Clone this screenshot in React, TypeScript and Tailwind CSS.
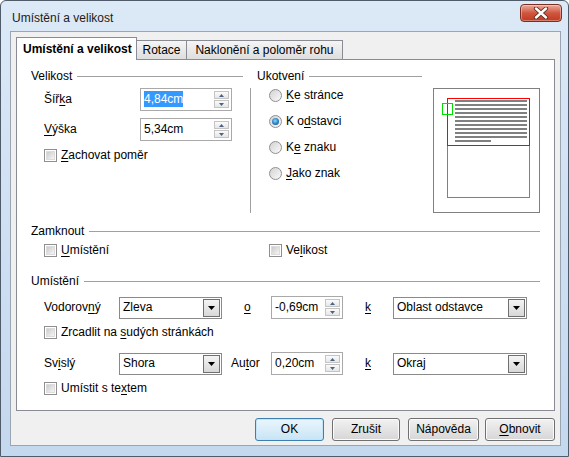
import React from 'react';

// Win7-style "Umístění a velikost" dialog

const Key = ({ children }: { children: React.ReactNode }) => (
  <span className="underline underline-offset-[2px] decoration-[1px]">{children}</span>
);

function Heading({ title, className = '' }: { title: string; className?: string }) {
  return (
    <div className={'flex items-center h-[16px] ' + className}>
      <span>{title}</span>
      <div className="flex-1 h-px bg-[#a0a0a0] ml-[5px]" />
    </div>
  );
}

function Checkbox({ children, className = '' }: { children: React.ReactNode; className?: string }) {
  return (
    <div className={'flex items-center h-[14px] ' + className}>
      <span className="w-[13px] h-[13px] border border-[#8f8f8f] bg-white p-[1px] shrink-0">
        <span className="block w-full h-full border border-[#dcdcdc] bg-gradient-to-br from-[#cbcbcb] to-[#f6f6f6]" />
      </span>
      <span className="ml-[4px]">{children}</span>
    </div>
  );
}

function Radio({ checked, children }: { checked?: boolean; children: React.ReactNode }) {
  return (
    <div className="flex items-center h-[16px] ml-[12px]">
      <span className="w-[13px] h-[13px] rounded-full border border-[#8f8f8f] bg-gradient-to-br from-[#d2d2d2] to-[#fbfbfb] flex items-center justify-center shrink-0">
        {checked && (
          <span className="w-[7px] h-[7px] rounded-full bg-[radial-gradient(circle_at_45%_40%,#8fd8ff,#2a7cc0_55%,#174a7a)]" />
        )}
      </span>
      <span className="ml-[4px]">{children}</span>
    </div>
  );
}

function SpinArrow({ up }: { up?: boolean }) {
  return (
    <span className="w-[15px] h-[8px] border border-[#c4c4c4] bg-gradient-to-b from-[#fbfbfb] to-[#e6e6e6] flex items-center justify-center">
      <svg width="5" height="3" viewBox="0 0 5 3">
        <path d={up ? 'M0 3 L2.5 0 L5 3 Z' : 'M0 0 L2.5 3 L5 0 Z'} fill="#4a6283" />
      </svg>
    </span>
  );
}

function Spin({ value, selected, className = '' }: { value: string; selected?: boolean; className?: string }) {
  return (
    <div className={'h-[23px] border border-[#a9a9a9] bg-white flex items-center pl-[3px] pr-[2px] ' + className}>
      <span className="flex-1">
        {selected ? <span className="bg-[#3399ff] text-white py-[1px]">{value}</span> : value}
      </span>
      <div className="flex flex-col gap-[1px]">
        <SpinArrow up />
        <SpinArrow />
      </div>
    </div>
  );
}

function Combo({ value, className = '' }: { value: string; className?: string }) {
  return (
    <div className={'h-[22px] border border-[#8a8a8a] bg-white flex items-center pl-[3px] pr-[1px] ' + className}>
      <span className="flex-1">{value}</span>
      <span className="w-[17px] h-[18px] border border-[#707070] bg-gradient-to-b from-[#f4f4f4] to-[#d8d8d8] flex items-center justify-center">
        <svg width="7" height="4" viewBox="0 0 7 4">
          <path d="M0 0 L7 0 L3.5 4 Z" fill="#000" />
        </svg>
      </span>
    </div>
  );
}

function Button({ children, className = '', primary }: { children: React.ReactNode; className?: string; primary?: boolean }) {
  return (
    <div
      className={
        'h-[23px] rounded-[3px] border flex items-center justify-center ' +
        (primary
          ? 'border-[#3c7fb1] bg-gradient-to-b from-[#eaf6fd] to-[#c9e4f5] shadow-[inset_0_0_0_1px_#c2e4f6] '
          : 'border-[#707070] bg-gradient-to-b from-[#f2f2f2] to-[#d6d6d6] shadow-[inset_0_0_0_1px_#fbfbfb] ') +
        className
      }
    >
      {children}
    </div>
  );
}

function Preview() {
  const lines = Array.from({ length: 10 });
  return (
    <div className="w-[107px] h-[125px] border border-[#808080] bg-white pt-[9px] pl-[13px]">
      <div className="relative w-[83px] h-[100px] flex flex-col">
        <div className="h-[48px] border border-[#ff0000] pl-[7px] pr-[2px] pt-[1px] flex flex-col gap-[2px]">
          {lines.map((_, i) => (
            <div key={i} className="h-[2px] bg-[#808080]" />
          ))}
          <div className="h-[2px] w-[36px] bg-[#808080]" />
        </div>
        <div className="flex-1 border-x border-b border-[#808080]" />
        <div className="absolute left-[-5px] top-[5px] w-[11px] h-[12px] border border-[#00e000]" />
      </div>
    </div>
  );
}

export default function App() {
  return (
    <div className="w-[569px] h-[457px] bg-white font-['Liberation_Sans',Arial,sans-serif] text-[12px] leading-[15px] text-black">
      <div className="w-full h-full rounded-t-[6px] border border-[#4f5b69] bg-gradient-to-b from-[#dce9f7] via-[#cfe0f3] to-[#c4d8ee] flex flex-col pl-[9px] pr-[7px] pb-[10px]">
        {/* title bar */}
        <div className="h-[30px] flex items-start -ml-[9px] -mr-[7px] pl-[11px] pr-[6px]">
          <span className="mt-[10px] text-[#1b1b1b]">Umístění a velikost</span>
          <div className="flex-1" />
          <div className="mt-[3px] w-[42px] h-[18px] rounded-[4px] border border-[#7a2f25] bg-gradient-to-b from-[#e9a99c] via-[#d0563f] to-[#c0391f] shadow-[inset_0_0_0_1px_rgba(255,255,255,0.35)] flex items-center justify-center">
            <svg width="16" height="12" viewBox="0 0 16 12">
              <path d="M3 1.5 L13 10.5 M13 1.5 L3 10.5" stroke="#5a2a22" strokeWidth="4.2" strokeLinecap="round" />
              <path d="M3 1.5 L13 10.5 M13 1.5 L3 10.5" stroke="#ffffff" strokeWidth="2.4" strokeLinecap="round" />
            </svg>
          </div>
        </div>

        {/* client area */}
        <div className="flex-1 border border-[#9aa5b1] bg-[#f0f0f0] pl-[5px] pr-[5px] pt-[5px] flex flex-col">
          {/* tabs */}
          <div className="h-[22px] flex items-end">
            <div className="relative z-10 -mb-px w-[121px] h-[23px] border border-b-0 border-[#898c95] bg-white pl-[6px] pt-[4px] font-bold">
              Umístění a velikost
            </div>
            <div className="w-[50px] h-[19px] border border-b-0 border-l-0 border-[#898c95] bg-gradient-to-b from-[#f5f5f5] to-[#dedede] flex items-center justify-center">
              Rotace
            </div>
            <div className="w-[156px] h-[19px] border border-b-0 border-l-0 border-[#898c95] bg-gradient-to-b from-[#f5f5f5] to-[#dedede] flex items-center justify-center">
              Naklonění a poloměr rohu
            </div>
          </div>

          {/* panel */}
          <div className="h-[352px] border border-[#898c95] bg-white pt-[8px]">
            <div className="flex">
              <div className="ml-[14px] w-[212px]">
                <Heading title="Velikost" />
                <div className="mt-[4px] flex items-center">
                  <span className="w-[109px] pl-[13px]">
                    Šíř<Key>k</Key>a
                  </span>
                  <Spin value="4,84cm" selected className="w-[92px]" />
                </div>
                <div className="mt-[7px] flex items-center">
                  <span className="w-[109px] pl-[13px]">
                    <Key>V</Key>ýška
                  </span>
                  <Spin value="5,34cm" className="w-[92px]" />
                </div>
                <Checkbox className="mt-[7px] ml-[13px]">
                  <Key>Z</Key>achovat poměr
                </Checkbox>
              </div>
              <div className="ml-[7px] mt-[20px] w-px h-[125px] bg-[#a0a0a0]" />
              <div className="ml-[6px] w-[165px]">
                <Heading title="Ukotvení" />
                <div className="mt-[3px] flex flex-col gap-[10px]">
                  <Radio>
                    <Key>K</Key>e stránce
                  </Radio>
                  <Radio checked>
                    K o<Key>d</Key>stavci
                  </Radio>
                  <Radio>
                    K<Key>e</Key> znaku
                  </Radio>
                  <Radio>
                    <Key>J</Key>ako znak
                  </Radio>
                </div>
              </div>
              <div className="ml-[11px] mt-[20px]">
                <Preview />
              </div>
            </div>

            <Heading title="Zamknout" className="mt-[10px] mx-[14px]" />
            <div className="mt-[4px] flex pl-[27px]">
              <Checkbox className="w-[225px]">
                <Key>U</Key>místění
              </Checkbox>
              <Checkbox>
                Ve<Key>l</Key>ikost
              </Checkbox>
            </div>

            <Heading title="Umístění" className="mt-[16px] mx-[14px]" />
            <div className="mt-[7px] flex items-center pl-[27px]">
              <span className="w-[75px]">
                Vodorov<Key>n</Key>ý
              </span>
              <Combo value="Zleva" className="w-[103px]" />
              <span className="w-[49px] pl-[22px]">
                <Key>o</Key>
              </span>
              <Spin value="-0,69cm" className="w-[72px] h-[22px]" />
              <span className="w-[50px] pl-[22px]">
                <Key>k</Key>
              </span>
              <Combo value="Oblast odstavce" className="w-[134px]" />
            </div>
            <Checkbox className="mt-[6px] ml-[27px]">
              Zrcadlit na <Key>s</Key>udých stránkách
            </Checkbox>
            <div className="mt-[13px] flex items-center pl-[27px]">
              <span className="w-[75px]">
                Sv<Key>i</Key>slý
              </span>
              <Combo value="Shora" className="w-[103px]" />
              <span className="w-[49px] pl-[9px]">
                Au<Key>t</Key>or
              </span>
              <Spin value="0,20cm" className="w-[72px] h-[22px]" />
              <span className="w-[50px] pl-[22px]">
                <Key>k</Key>
              </span>
              <Combo value="Okraj" className="w-[134px]" />
            </div>
            <Checkbox className="mt-[6px] ml-[27px]">
              Umístit s te<Key>x</Key>tem
            </Checkbox>
          </div>

          {/* buttons */}
          <div className="mt-[7px] flex justify-end">
            <Button primary className="w-[69px]">OK</Button>
            <Button className="w-[68px] ml-[8px]">Zrušit</Button>
            <Button className="w-[71px] ml-[8px]">Nápověda</Button>
            <Button className="w-[70px] ml-[6px]">
              <Key>O</Key>bnovit
            </Button>
          </div>
        </div>
      </div>
    </div>
  );
}
